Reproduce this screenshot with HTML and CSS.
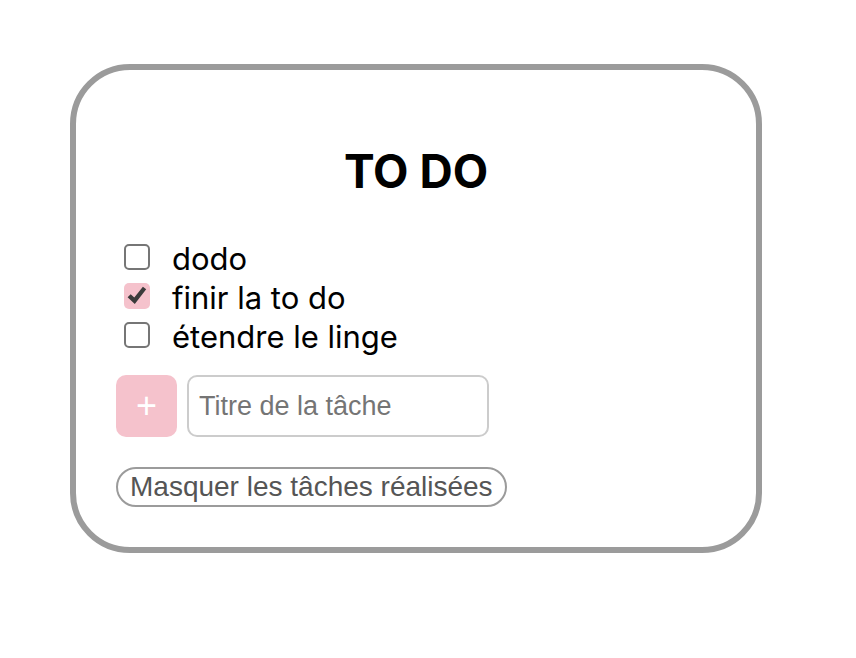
FILE: index.html
```html
<!DOCTYPE html>
<html lang="fr">
<head>
<meta charset="utf-8">
<title>To do</title>
<link rel="stylesheet" href="styles.css">
</head>
<body>
<main class="card">
  <h1 class="title">TO DO</h1>
  <ul class="tasks">
    <li><label class="task"><input class="check" type="checkbox">dodo</label></li>
    <li><label class="task"><input class="check" type="checkbox" checked>finir la to do</label></li>
    <li><label class="task"><input class="check" type="checkbox">étendre le linge</label></li>
  </ul>
  <form class="add">
    <button class="add-button" type="button" aria-label="Ajouter">+</button>
    <input class="add-input" type="text" placeholder="Titre de la tâche" aria-label="Titre de la tâche">
  </form>
  <button class="toggle" type="button">Masquer les tâches réalisées</button>
</main>
</body>
</html>
```

FILE: styles.css
```css
* {
  box-sizing: border-box;
}

body {
  margin: 64px 94px 64px 70px;
  background: #fff;
  color: #000;
  font-family: Inter, "Liberation Sans", sans-serif;
}

.card {
  padding: 72px 40px 40px;
  border: 6px solid #9b9b9b;
  border-radius: 60px;
}

.title {
  margin: 0 0 39px;
  font-size: 46px;
  line-height: 58px;
  font-weight: 700;
  text-align: center;
}

.tasks {
  margin: 0 0 19px;
  padding: 0;
  list-style: none;
}

.task {
  display: flex;
  align-items: center;
  gap: 22px;
  padding-left: 8px;
  font-size: 31px;
  line-height: 39px;
}

.check {
  appearance: none;
  width: 26px;
  height: 26px;
  margin: 0 0 4px;
  border: 2px solid #767676;
  border-radius: 5px;
}

.check:checked {
  border: 0;
  background: #f5c2cc url("data:image/svg+xml,%3Csvg xmlns='http://www.w3.org/2000/svg' viewBox='0 0 26 26'%3E%3Cpath d='M3.6 14.3L6.7 11.2L10.3 14.6L18.9 3.8L22.2 6.3L10.8 21Z' fill='%233b3b3b'/%3E%3C/svg%3E");
}

.add {
  display: flex;
  gap: 10px;
  margin-bottom: 30px;
}

.add-button {
  width: 61px;
  height: 62px;
  padding: 0;
  border: 0;
  border-radius: 10px;
  background: #f5c2cc;
  color: #fff;
  font: 36px "Liberation Sans", sans-serif;
}

.add-input {
  width: 302px;
  height: 62px;
  padding: 0 10px;
  border: 2px solid #ccc;
  border-radius: 10px;
  font: 27px "Liberation Sans", sans-serif;
}

.add-input::placeholder {
  color: #757575;
}

.toggle {
  display: block;
  height: 40px;
  padding: 0 12px;
  border: 2px solid #9b9b9b;
  border-radius: 20px;
  background: #fff;
  color: #555;
  font: 28px "Liberation Sans", sans-serif;
}
```
